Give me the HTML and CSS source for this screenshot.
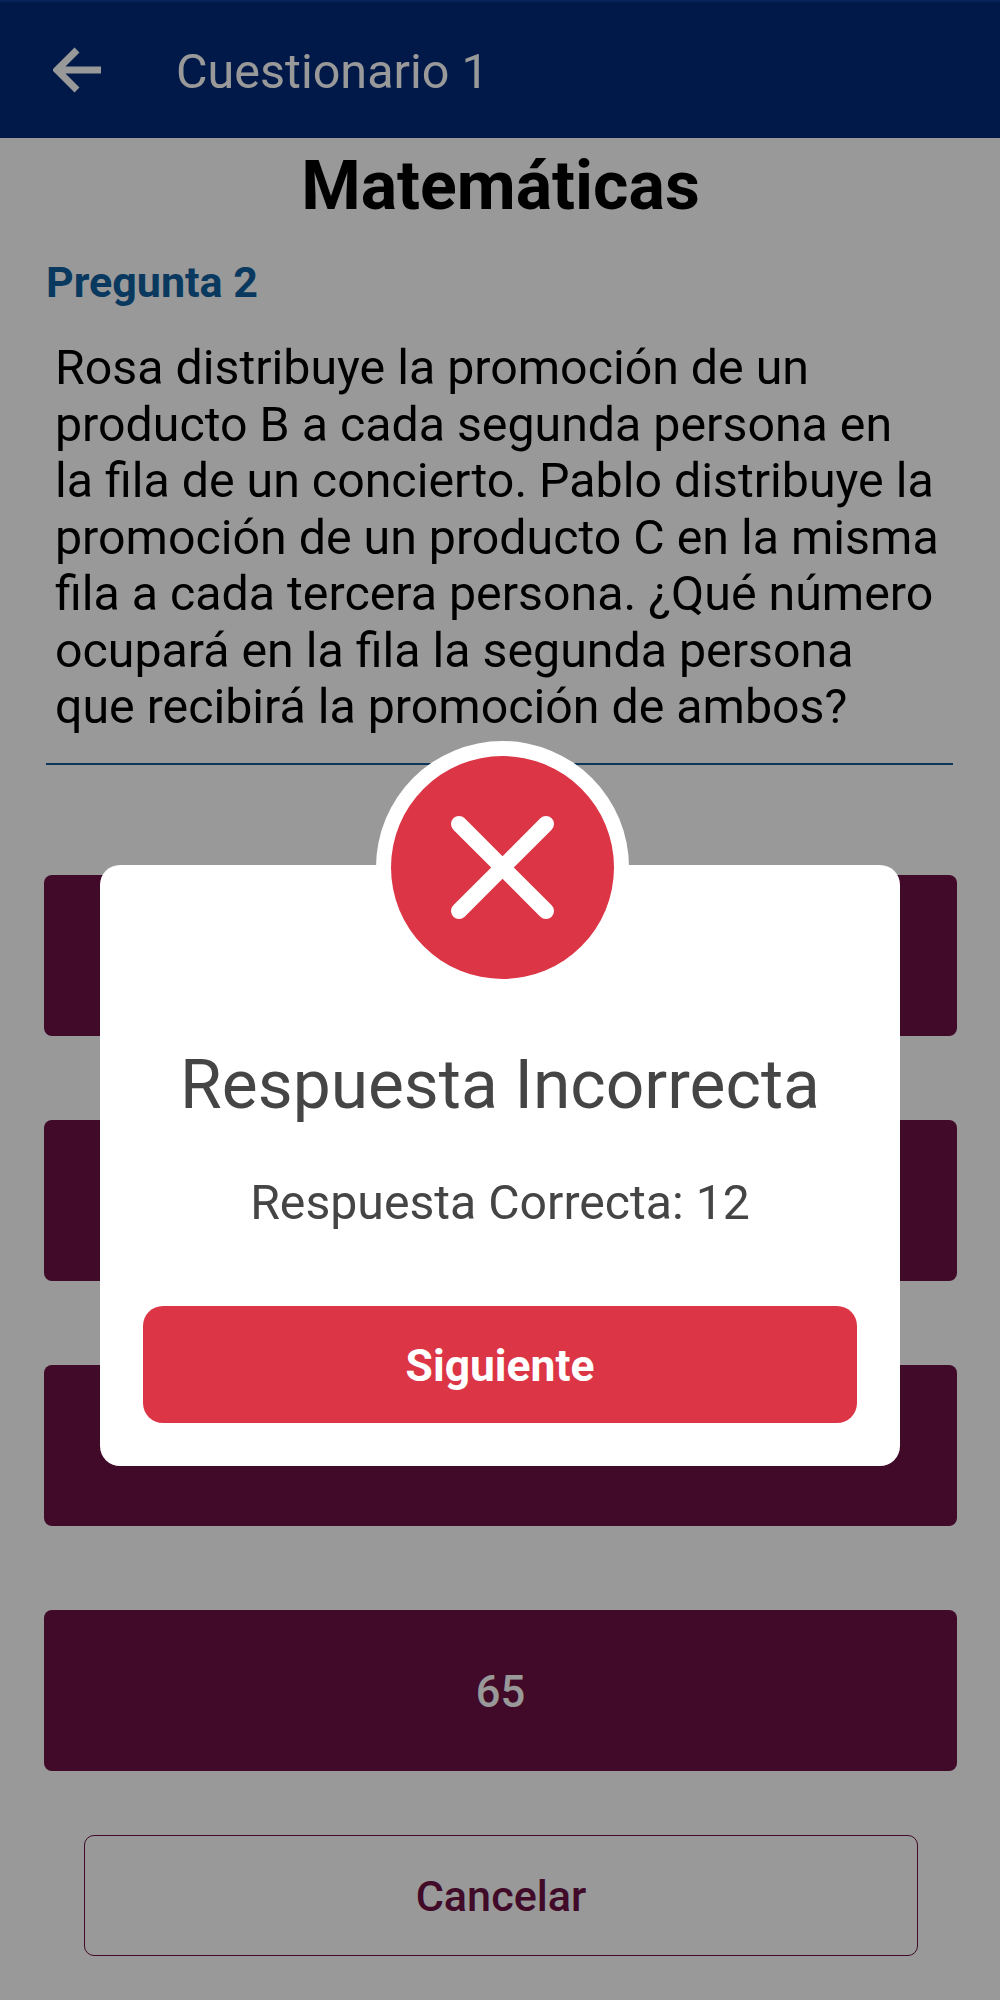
FILE: index.html
```html
<!DOCTYPE html>
<html>
	<head>
		<meta charset="UTF-8">
		<title>Cuestionario 1</title>
		<link rel="stylesheet" href="styles.css">
	</head>
	<body>
		<div id="page">
			<div class="header">
				<svg class="back" viewBox="0 0 50 46" width="50" height="46">
					<path d="M48 23H5M24 3L4 23l20 20" fill="none" stroke="#fff" stroke-width="7"/>
				</svg>
				<span class="header-title">Cuestionario 1</span>
			</div>
			<div class="content">
				<h1 class="subject">Matemáticas</h1>
				<h2 class="number">Pregunta 2</h2>
				<p class="question">Rosa distribuye la promoción de un<br>producto B a cada segunda persona en<br>la fila de un concierto. Pablo distribuye la<br>promoción de un producto C en la misma<br>fila a cada tercera persona. ¿Qué número<br>ocupará en la fila la segunda persona<br>que recibirá la promoción de ambos?</p>
				<div class="rule"></div>
				<div class="options">
					<div class="option"></div>
					<div class="option"></div>
					<div class="option"></div>
					<div class="option">65</div>
				</div>
				<div class="cancel">Cancelar</div>
			</div>
		</div>
		<!-- capa oscura y aviso -->
		<div class="overlay">
			<div class="modal">
				<div class="badge">
					<svg viewBox="0 0 223 223" width="223" height="223">
						<circle cx="111.500" cy="111.500" r="111.500" fill="#dc3545"/>
						<path d="M68 68l87 87M155 68l-87 87" stroke="#fff" stroke-width="16" stroke-linecap="round"/>
					</svg>
				</div>
				<div class="modal-title">Respuesta Incorrecta</div>
				<div class="modal-text">Respuesta Correcta: 12</div>
				<div class="next">Siguiente</div>
			</div>
		</div>
	</body>
</html>
```

FILE: styles.css
```css
html, body{
	margin: 0;
	padding: 0;
}
body{
	width: 1000px;
	height: 2000px;
	overflow: hidden;
	background-color: #fff;
	font-family: Roboto, "Liberation Sans", sans-serif;
}
.header{
	display: flex;
	align-items: center;
	height: 136px;
	border-top: 2px solid #0a3a8f;
	background-color: #002b7b;
	padding-left: 53px;
}
.back{
	margin-right: 73px;
}
.header-title{
	padding-top: 3px;
	color: #fff;
	font-size: 48.500px;
}
.content{
	padding: 0 43px 0 44px;
}
.subject{
	margin: 10px 0 0;
	font-size: 68px;
	line-height: 76px;
	text-align: center;
	color: #000;
}
.number{
	margin: 35px 0 0 2px;
	font-size: 43px;
	line-height: 46px;
	color: #10609f;
}
.question{
	margin: 35px 0 0 11px;
	font-size: 48.300px;
	line-height: 56.500px;
	color: #000;
}
.rule{
	margin: 27px 4px 0 2px;
	height: 2px;
	background-color: #0f5a96;
}
.options{
	display: flex;
	flex-direction: column;
	gap: 84px;
	margin-top: 110px;
}
.option{
	display: flex;
	align-items: center;
	justify-content: center;
	box-sizing: border-box;
	height: 161px;
	padding-top: 5px;
	border-radius: 8px;
	background-color: #6b1143;
	color: #fff;
	font-size: 43.500px;
	font-weight: 500;
}
.cancel{
	display: flex;
	align-items: center;
	justify-content: center;
	box-sizing: border-box;
	height: 121px;
	margin: 64px 39px 0 40px;
	padding-top: 3px;
	border: 1px solid #6b1143;
	border-radius: 10px;
	color: #6b1143;
	font-size: 43.200px;
	font-weight: 500;
}
.overlay{
	position: absolute;
	top: 0;
	left: 0;
	width: 1000px;
	height: 2000px;
	box-sizing: border-box;
	padding: 865px 100px 0;
	background-color: rgba(0,0,0,.4);
}
.modal{
	position: relative;
	box-sizing: border-box;
	height: 601px;
	padding: 0 43px;
	border-radius: 20px;
	background-color: #fff;
	text-align: center;
}
.badge{
	position: absolute;
	top: -124px;
	left: 276px;
	width: 223px;
	height: 223px;
	padding: 15px;
	border-radius: 50%;
	background-color: #fff;
}
.modal-title{
	padding-top: 178px;
	font-size: 67.700px;
	line-height: 84px;
	color: #454545;
}
.modal-text{
	margin-top: 48px;
	font-size: 48.200px;
	line-height: 56px;
	color: #454545;
}
.next{
	display: flex;
	align-items: center;
	justify-content: center;
	box-sizing: border-box;
	height: 117px;
	margin-top: 75px;
	padding-top: 3px;
	border-radius: 20px;
	background-color: #dc3545;
	color: #fff;
	font-size: 44.400px;
	font-weight: 700;
}
```
